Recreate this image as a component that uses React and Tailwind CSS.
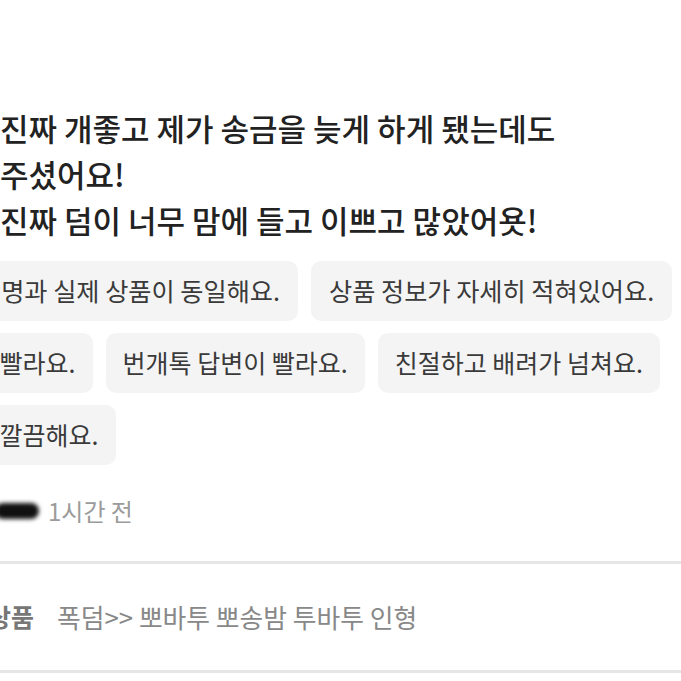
import React from 'react';

const font = { fontFamily: '"Noto Sans CJK KR", "Noto Sans", sans-serif' };

const chipRows = [
  ['상품 설명과 실제 상품이 동일해요.', '상품 정보가 자세히 적혀있어요.'],
  ['배송이 빨라요.', '번개톡 답변이 빨라요.', '친절하고 배려가 넘쳐요.'],
  ['포장이 깔끔해요.'],
];

function Chip({ label, wide }) {
  return (
    <div
      className={`flex h-[60px] shrink-0 items-center rounded-[10px] bg-[#f4f4f4] text-[#3a3a3a] whitespace-nowrap ${
        wide ? 'px-[18px] text-[25.2px]' : 'px-[17px] text-[25px]'
      }`}
    >
      {label}
    </div>
  );
}

export default function App() {
  return (
    <div className="w-[681px] h-[681px] overflow-hidden bg-white" style={font}>
      <div className="pt-[105px] text-[31px] leading-[46px] font-medium text-[#222] whitespace-nowrap">
        <p>진짜 개좋고 제가 송금을 늦게 하게 됐는데도</p>
        <p>주셨어요!</p>
        <p>진짜 덤이 너무 맘에 들고 이쁘고 많았어욧!</p>
      </div>

      <div className="mt-[18px] ml-[-92px] flex flex-col gap-[12px]">
        {chipRows.map((row, i) => (
          <div key={i} className="flex gap-[13px]">
            {row.map((c) => (
              <Chip key={c} label={c} wide={i === 0} />
            ))}
          </div>
        ))}
      </div>

      <div className="mt-[31px] flex h-[30px] items-center gap-[9px]">
        <div className="h-[16px] w-[44px] ml-[-5px] rounded-full bg-[#111] blur-[2px]" />
        <span className="text-[24px] text-[#9b9b9b]">1시간 전</span>
      </div>

      <div className="mt-[35px] h-[3px] bg-[#e6e6e6]" />

      <div className="flex h-[106px] items-center">
        <span className="ml-[-12px] w-[69px] shrink-0 text-[25px] font-bold text-[#777]">상품</span>
        <span className="text-[25.8px] text-[#888] whitespace-nowrap">폭덤&gt;&gt; 뽀바투 뽀송밤 투바투 인형</span>
      </div>

      <div className="h-[3px] bg-[#e6e6e6]" />
    </div>
  );
}
